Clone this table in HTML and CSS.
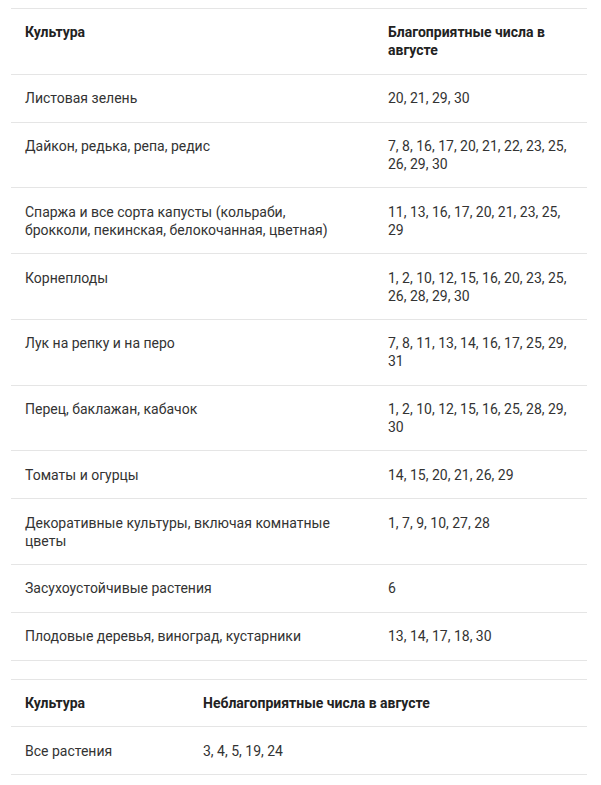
FILE: index.html
```html
<!DOCTYPE html>
<html lang="ru">
<head>
<meta charset="utf-8">
<link rel="stylesheet" href="styles.css">
</head>
<body>
<div class="page">
  <table class="tbl tbl-good">
    <colgroup><col class="c1"><col class="c2"></colgroup>
    <thead>
      <tr><th>Культура</th><th>Благоприятные числа в августе</th></tr>
    </thead>
    <tbody>
      <tr><td>Листовая зелень</td><td>20, 21, 29, 30</td></tr>
      <tr><td>Дайкон, редька, репа, редис</td><td>7, 8, 16, 17, 20, 21, 22, 23, 25, 26, 29, 30</td></tr>
      <tr><td>Спаржа и все сорта капусты (кольраби, брокколи, пекинская, белокочанная, цветная)</td><td>11, 13, 16, 17, 20, 21, 23, 25, 29</td></tr>
      <tr><td>Корнеплоды</td><td>1, 2, 10, 12, 15, 16, 20, 23, 25, 26, 28, 29, 30</td></tr>
      <tr><td>Лук на репку и на перо</td><td>7, 8, 11, 13, 14, 16, 17, 25, 29, 31</td></tr>
      <tr><td>Перец, баклажан, кабачок</td><td>1, 2, 10, 12, 15, 16, 25, 28, 29, 30</td></tr>
      <tr><td>Томаты и огурцы</td><td>14, 15, 20, 21, 26, 29</td></tr>
      <tr><td>Декоративные культуры, включая комнатные цветы</td><td>1, 7, 9, 10, 27, 28</td></tr>
      <tr><td>Засухоустойчивые растения</td><td>6</td></tr>
      <tr><td>Плодовые деревья, виноград, кустарники</td><td>13, 14, 17, 18, 30</td></tr>
    </tbody>
  </table>
  <table class="tbl tbl-bad">
    <colgroup><col class="c1"><col class="c2"></colgroup>
    <thead>
      <tr><th>Культура</th><th>Неблагоприятные числа в августе</th></tr>
    </thead>
    <tbody>
      <tr><td>Все растения</td><td>3, 4, 5, 19, 24</td></tr>
    </tbody>
  </table>
</div>
</body>
</html>
```
FILE: styles.css
```css
html, body {
  margin: 0;
  padding: 0;
  background: #ffffff;
}
.page {
  padding: 8px 14px 0 11px;
  display: flex;
  flex-direction: column;
  gap: 18px;
}
.tbl {
  width: 576px;
  border-collapse: collapse;
  table-layout: fixed;
  font-family: Roboto, "Noto Sans", sans-serif;
  font-size: 14px;
  line-height: 18px;
  color: #333333;
}
.tbl tr {
  border-top: 1px solid #e5e5e5;
  border-bottom: 1px solid #e5e5e5;
}
.tbl th, .tbl td {
  text-align: left;
  vertical-align: top;
  padding: 14.4px 14px 14.4px 14px;
}
.tbl-good th:first-child, .tbl-good td:first-child {
  padding-right: 42px;
}
.tbl th {
  font-weight: 700;
  color: #222222;
}
.tbl-good .c1 { width: 363px; }
.tbl-good .c2 { width: 213px; }
.tbl-bad .c1 { width: 178px; }
.tbl-bad .c2 { width: 398px; }
```
